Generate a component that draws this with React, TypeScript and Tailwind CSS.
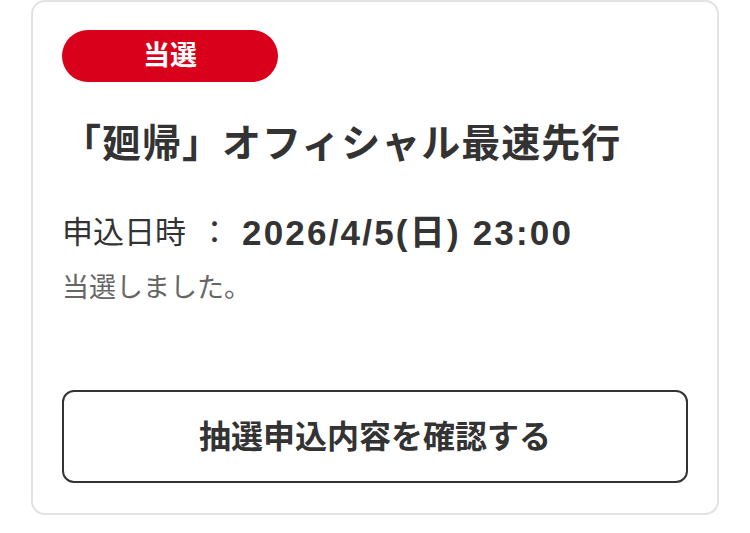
import React from "react";

const jp = "font-['Liberation_Sans','Noto_Sans_CJK_JP',sans-serif]";

export default function App() {
  return (
    <div className={`min-h-[533px] bg-white px-[31px] text-[#333] ${jp}`}>
      <div className="flex flex-col rounded-[14px] border-2 border-[#e2e2e2] px-[29px] pt-[28px] pb-[30px]">
        {/* status badge */}
        <div className="flex h-[52px] w-[216px] items-center justify-center rounded-full bg-[#d9001b]">
          <span className="text-[27px] font-bold leading-none text-white">当選</span>
        </div>

        <h2 className="mt-[39px] text-[39px] font-bold leading-[46px] tracking-[1px]">
          「廻帰」オフィシャル最速先行
        </h2>

        <div className="mt-[45px] flex h-[40px] items-center">
          <span className="text-[31px] leading-none">申込日時</span>
          <span className="ml-[13px] text-[31px] leading-none">：</span>
          <span className="ml-[12px] text-[35px] font-bold leading-none tracking-[2.2px]">2026/4/5(日) 23:00</span>
        </div>

        <p className="mt-[19px] text-[27px] leading-[34px] text-[#666]">当選しました。</p>

        <button className="mt-[85px] flex h-[93px] items-center justify-center rounded-[12px] border-2 border-[#333] bg-white">
          <span className="text-[32px] font-bold leading-none text-[#333]">抽選申込内容を確認する</span>
        </button>
      </div>
    </div>
  );
}
